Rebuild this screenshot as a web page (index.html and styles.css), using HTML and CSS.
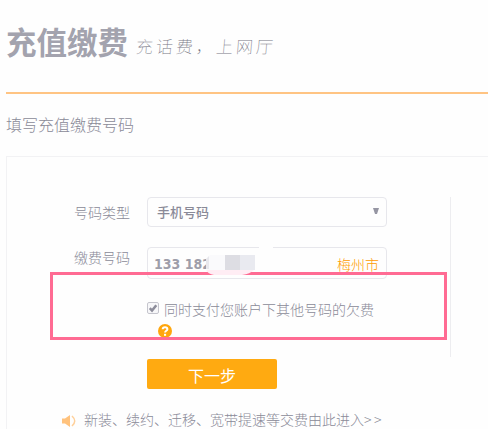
FILE: index.html
```html
<!DOCTYPE html>
<html lang="zh-CN">
<head>
<meta charset="utf-8">
<title>充值缴费</title>
<link rel="stylesheet" href="styles.css">
</head>
<body>
<header class="header">
  <h1 class="title">充值缴费</h1>
  <span class="slogan">充话费，上网厅</span>
</header>
<h2 class="subtitle">填写充值缴费号码</h2>
<main class="panel">
  <form class="form">
    <div class="row">
      <span class="label">号码类型</span>
      <div class="field select"><span>手机号码</span>
        <svg class="arrow" width="6" height="6" viewBox="0 0 6 6"><path d="M0 0H6L4 6H2Z"/></svg>
      </div>
    </div>
    <div class="row row-number">
      <span class="label label-number">缴费号码</span>
      <div class="field number"><span>133 182</span><span class="city">梅州市</span>
        <i class="gap"></i>
      </div>
    </div>
    <div class="row agree">
      <svg class="check" width="12" height="12" viewBox="0 0 12 12"><rect x=".5" y=".5" width="11" height="11" rx="1.5"/><path d="M2.8 6.2L5 8.5L9.3 3.2"/></svg>
      <span>同时支付您账户下其他号码的欠费</span>
    </div>
    <svg class="help" width="14" height="14" viewBox="0 0 14 14"><circle cx="7" cy="7" r="7"/><path d="M4.7 5.3C4.7 2.5 9.4 2.6 9.4 5.2C9.4 6.8 7.1 6.8 7.1 8.5"/><rect x="6" y="9.8" width="2.1" height="2"/></svg>
    <div class="next">下一步</div>
  </form>
  <div class="notice">
    <svg width="14" height="12" viewBox="0 0 14 12"><path class="horn" d="M0 3.5H3L8 0V12L3 8.5H0Z"/><path class="wave" d="M10 1Q15.5 6 10 11"/></svg>
    <span class="notice-text">新装、续约、迁移、宽带提速等交费由此进入<span class="more">&gt;&gt;</span></span>
  </div>
</main>
<div class="highlight"></div>
<svg class="mask" width="52" height="22" viewBox="0 0 52 22"><path fill="#fafafc" d="M6 1H21V16H3Q0 7 6 1Z"/><path fill="#ffedf4" d="M2 16H50Q46 20 38 21H10Q4 20 2 16Z"/><path fill="#e8e8ed" d="M2 5L5 2V15H2Z"/><path fill="#dddde3" d="M21 1H36V16H21Z"/><path fill="#e9eaf0" d="M36 1H51V16H36Z"/></svg>
</body>
</html>
```
FILE: styles.css
```css
* { box-sizing: border-box; }
body {
  margin: 0;
  width: 488px;
  height: 429px;
  overflow: hidden;
  position: relative;
  padding-left: 6px;
  background: #fefefe;
  color: #8a8a98;
  font: 300 14px/20px "Noto Sans CJK SC", sans-serif;
}
svg { display: block; flex: none; }
.header {
  display: flex;
  height: 94px;
  padding-top: 21px;
  border-bottom: 2px solid #ffc483;
}
.title { margin: 0; font-size: 30.5px; line-height: 40px; font-weight: 700; color: #a3a3ae; white-space: nowrap; }
.slogan { margin: 6px 0 0 7px; font-size: 17px; line-height: 38px; letter-spacing: 3px; font-weight: 100; color: #777785; white-space: nowrap; transform: skewX(-5deg); }
.subtitle { margin: 18px 0 0; font-size: 16px; line-height: 24px; font-weight: 300; }
.panel {
  height: 273px;
  margin-top: 20px;
  border: solid #f2f2f4;
  border-width: 1px 0 0 1px;
  padding: 40px 0 0 52px;
}
.form { width: 392px; height: 160px; border-right: 1px solid #ededf0; padding-left: 15px; }
.row { display: flex; }
.label { width: 73px; padding-top: 5px; }
.label-number { padding-top: 0; }
.field {
  width: 240px;
  height: 30px;
  border: 1px solid #e7e7ec;
  border-radius: 4px;
  display: flex;
  align-items: center;
  justify-content: space-between;
  padding: 0 7px 0 9px;
}
.select { font-size: 13px; font-weight: 500; }
.arrow { fill: #9696a3; margin-top: -3px; }
.row-number { margin-top: 20px; }
.number {
  height: 32px;
  padding: 2px 7px 0 6px;
  position: relative;
  color: #9e9eaa;
  font: 700 14px/20px "DejaVu Sans Condensed", "DejaVu Sans", sans-serif;
}
.city { font: 300 14px/20px "Noto Sans CJK SC", sans-serif; color: #ff9b00; }
.gap { position: absolute; left: 111px; top: -1px; width: 14px; height: 1px; background: #fefefe; }
.agree { margin: 20px 0 0 73px; gap: 5px; }
.check { margin-top: 3px; }
.check rect { fill: #f7f7f9; stroke: #c5c5cd; }
.check path { fill: none; stroke: #8d8d9b; stroke-width: 2.5; }
.help { margin: 5px 0 0 84px; }
.help circle { fill: #ffa60d; }
.help path { fill: none; stroke: #fff; stroke-width: 2; }
.help rect { fill: #fff; }
.next {
  width: 130px;
  height: 30px;
  margin: 21px 0 0 73px;
  border-radius: 2px;
  background: #ffaa11;
  color: #fff;
  text-align: center;
  font-size: 16px;
  line-height: 32px;
  font-weight: 400;
}
.notice { display: flex; align-items: center; height: 20px; margin-top: 53px; padding-left: 3px; gap: 8px; white-space: nowrap; }
.notice svg { margin-top: 2px; }
.notice-text { margin-top: -2px; }
.notice .horn { fill: #ffc27d; }
.notice .wave { fill: none; stroke: #ffd09a; stroke-width: 1.5; }
.more { letter-spacing: 2.4px; }
.highlight { position: absolute; left: 50px; top: 272px; width: 397px; height: 68px; border: 3px solid #ff6b93; }
.mask { position: absolute; left: 204px; top: 254px; }
```
